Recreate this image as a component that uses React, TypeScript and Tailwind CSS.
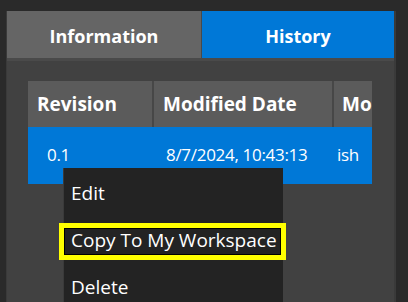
export default function App() {
  const font = { fontFamily: '"Open Sans", "Noto Sans", sans-serif' }
  return (
    <div
      className="relative w-[408px] h-[302px] overflow-hidden bg-[#2a2a2a] pt-[11px] pl-[6px]"
      style={font}
    >
      <div className="w-[390px] h-[291px] bg-[#414141] border-l border-r-2 border-[#3a3a3a]">
        {/* tabs */}
        <div className="flex h-[47px]">
          <div className="w-[194px] flex items-center justify-center pt-[4px] bg-[#656565] text-white font-bold text-[18px]">
            Information
          </div>
          <div className="w-[1px] bg-[#4a4a4a]" />
          <div className="flex-1 flex items-center justify-center pt-[4px] bg-[#0078d7] text-white font-bold text-[18px]">
            History
          </div>
        </div>
        <div className="h-[3px] bg-[#4a4a4a]" />

        {/* table */}
        <div className="pl-[21px] pt-[20px]">
          <div className="w-[344px] overflow-hidden">
            <div className="flex h-[46px] bg-[#5b5b5b] text-white font-bold text-[19px] whitespace-nowrap">
              <div className="w-[124px] flex items-center pl-[9px]">Revision</div>
              <div className="w-[2px] bg-[#474747]" />
              <div className="w-[178px] flex items-center pl-[9px]">Modified Date</div>
              <div className="w-[2px] bg-[#474747]" />
              <div className="flex-1 flex items-center pl-[8px]">Mo</div>
            </div>
            <div className="flex h-[57px] bg-[#0078d7] text-white text-[17px] tracking-[-0.3px] whitespace-nowrap">
              <div className="w-[126px] flex items-start pt-[15px] pl-[19px]">0.1</div>
              <div className="w-[178px] flex items-start pt-[15px] pl-[12px]">8/7/2024, 10:43:13</div>
              <div className="flex-1 flex items-start pt-[15px] pl-[5px]">ish</div>
            </div>
          </div>
        </div>
      </div>

      {/* context menu */}
      <div className="absolute left-[63px] top-[168px] w-[220px] h-[150px] bg-[#232323] border-l border-[#3a3a3a] pt-[2px] text-white text-[19px]">
        <div className="h-[47px] flex items-center pl-[7px]">Edit</div>
        <div className="relative h-[47px] flex items-center pl-[7px]">
          <div className="absolute left-[-5px] right-[-3px] top-[6px] bottom-[4px] border-[5px] border-[#ffff00]">
            <div className="w-full h-full border border-black" />
          </div>
          <span className="relative">Copy To My Workspace</span>
        </div>
        <div className="h-[47px] flex items-center pl-[7px]">Delete</div>
      </div>
    </div>
  )
}
